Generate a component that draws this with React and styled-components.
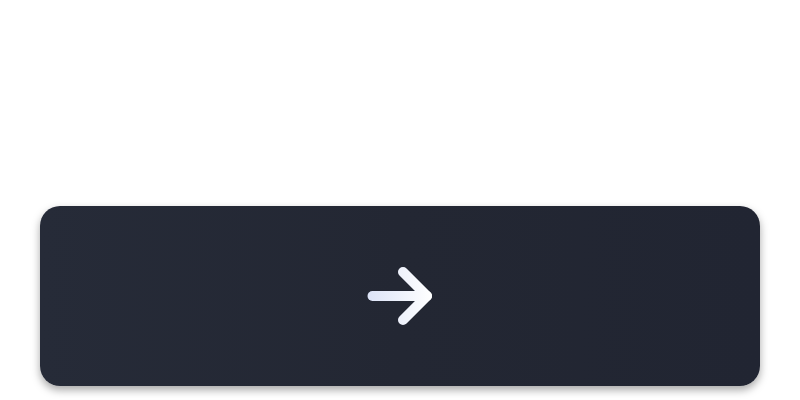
import React from "react";
import styled, { createGlobalStyle } from "styled-components";

const Global = createGlobalStyle`
  html, body { margin: 0; padding: 0; background: #ffffff; font-family: "Inter", "Liberation Sans", sans-serif; }
`;

const Page = styled.div`
  width: 800px;
  height: 400px;
  box-sizing: border-box;
  padding: 206px 40px 0;
  display: flex;
  flex-direction: column;
`;

const ActionButton = styled.button`
  width: 720px;
  height: 180px;
  border: none;
  border-radius: 20px;
  background: linear-gradient(90deg, #262b38 0%, #232733 50%, #212532 100%);
  box-shadow: 0 4px 8px rgba(0, 0, 0, 0.35);
  display: flex;
  align-items: center;
  justify-content: center;
  padding: 0;
  cursor: pointer;
`;

const Arrow = () => (
  <svg width="80" height="80" viewBox="0 0 80 80" fill="none" strokeWidth="10" strokeLinecap="round" strokeLinejoin="round">
    <defs>
      <linearGradient id="ag" x1="8" y1="40" x2="72" y2="40" gradientUnits="userSpaceOnUse">
        <stop offset="0" stopColor="#dde4f8" />
        <stop offset="1" stopColor="#ffffff" />
      </linearGradient>
    </defs>
    <path d="M12.5 40H67" stroke="url(#ag)" />
    <path d="M43 16L67 40L43 64" stroke="url(#ag)" />
  </svg>
);

export default function App() {
  return (
    <>
      <Global />
      <Page>
        <ActionButton aria-label="Next">
          <Arrow />
        </ActionButton>
      </Page>
    </>
  );
}
